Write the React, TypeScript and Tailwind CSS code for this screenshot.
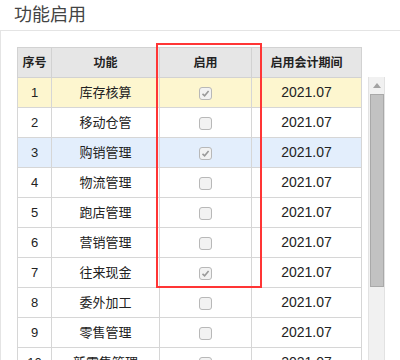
import React from "react";

type Row = { no: number; name: string; on: boolean; period: string; bg?: string };

const rows: Row[] = [
  { no: 1, name: "库存核算", on: true, period: "2021.07", bg: "bg-[#fdf6cf]" },
  { no: 2, name: "移动仓管", on: false, period: "2021.07" },
  { no: 3, name: "购销管理", on: true, period: "2021.07", bg: "bg-[#e3eefc]" },
  { no: 4, name: "物流管理", on: false, period: "2021.07" },
  { no: 5, name: "跑店管理", on: false, period: "2021.07" },
  { no: 6, name: "营销管理", on: false, period: "2021.07" },
  { no: 7, name: "往来现金", on: true, period: "2021.07" },
  { no: 8, name: "委外加工", on: false, period: "2021.07" },
  { no: 9, name: "零售管理", on: false, period: "2021.07" },
  { no: 10, name: "新零售管理", on: false, period: "2021.07" },
];

function Check({ on }: { on: boolean }) {
  return (
    <span className="inline-flex h-[13px] w-[13px] items-center justify-center rounded-[3px] border border-[#b8b8b8] bg-[#f2f2f2] align-middle">
      {on && (
        <svg width="9" height="9" viewBox="0 0 9 9">
          <path d="M1.5 4.8 L3.6 6.8 L7.6 2" fill="none" stroke="#9a9a9a" strokeWidth="1.6" />
        </svg>
      )}
    </span>
  );
}

export default function App() {
  return (
    <div
      className="relative h-[360px] w-[400px] overflow-hidden bg-white text-[#222]"
      style={{ fontFamily: '"Liberation Sans", "Noto Sans CJK SC", sans-serif' }}
    >
      <div className="flex h-[30px] items-center px-[14px] text-[18px] text-[#444]">功能启用</div>
      <div className="flex h-[330px] border-l border-t border-[#e4e4e4] pl-[16px] pt-[16px]">
        <table className="w-[344px] table-fixed border-collapse text-[13px]">
          <colgroup>
            <col className="w-[34px]" />
            <col className="w-[108px]" />
            <col className="w-[92px]" />
            <col className="w-[110px]" />
          </colgroup>
          <thead>
            <tr className="h-[30px] bg-[#e6e6e6] text-[12px] font-bold">
              <th className="border border-[#d2d2d2]">序号</th>
              <th className="border border-[#d2d2d2]">功能</th>
              <th className="border border-[#d2d2d2]">启用</th>
              <th className="border border-[#d2d2d2]">启用会计期间</th>
            </tr>
          </thead>
          <tbody>
            {rows.map((r) => (
              <tr key={r.no} className={`h-[30px] ${r.bg ?? "bg-white"}`}>
                <td className="border border-[#d6d6d6] text-center">{r.no}</td>
                <td className="border border-[#d6d6d6] text-center">{r.name}</td>
                <td className="border border-[#d6d6d6] text-center">
                  <Check on={r.on} />
                </td>
                <td className="border border-[#d6d6d6] text-center text-[14px]">{r.period}</td>
              </tr>
            ))}
          </tbody>
        </table>
        <div className="ml-[6px] mt-[30px] flex w-[17px] flex-col border-x border-[#e2e2e2] bg-[#f1f1f1]">
          <div className="flex h-[17px] items-center justify-center">
            <svg width="8" height="5" viewBox="0 0 8 5">
              <path d="M0 5 L4 0 L8 5 Z" fill="#a3a3a3" />
            </svg>
          </div>
          <div className="mx-auto h-[193px] w-[14px] border border-[#a9a9a9] bg-[#c2c2c2]" />
        </div>
      </div>
      <div className="absolute left-[156px] top-[43px] h-[245px] w-[106px] border-2 border-[#ff3535]" />
    </div>
  );
}
